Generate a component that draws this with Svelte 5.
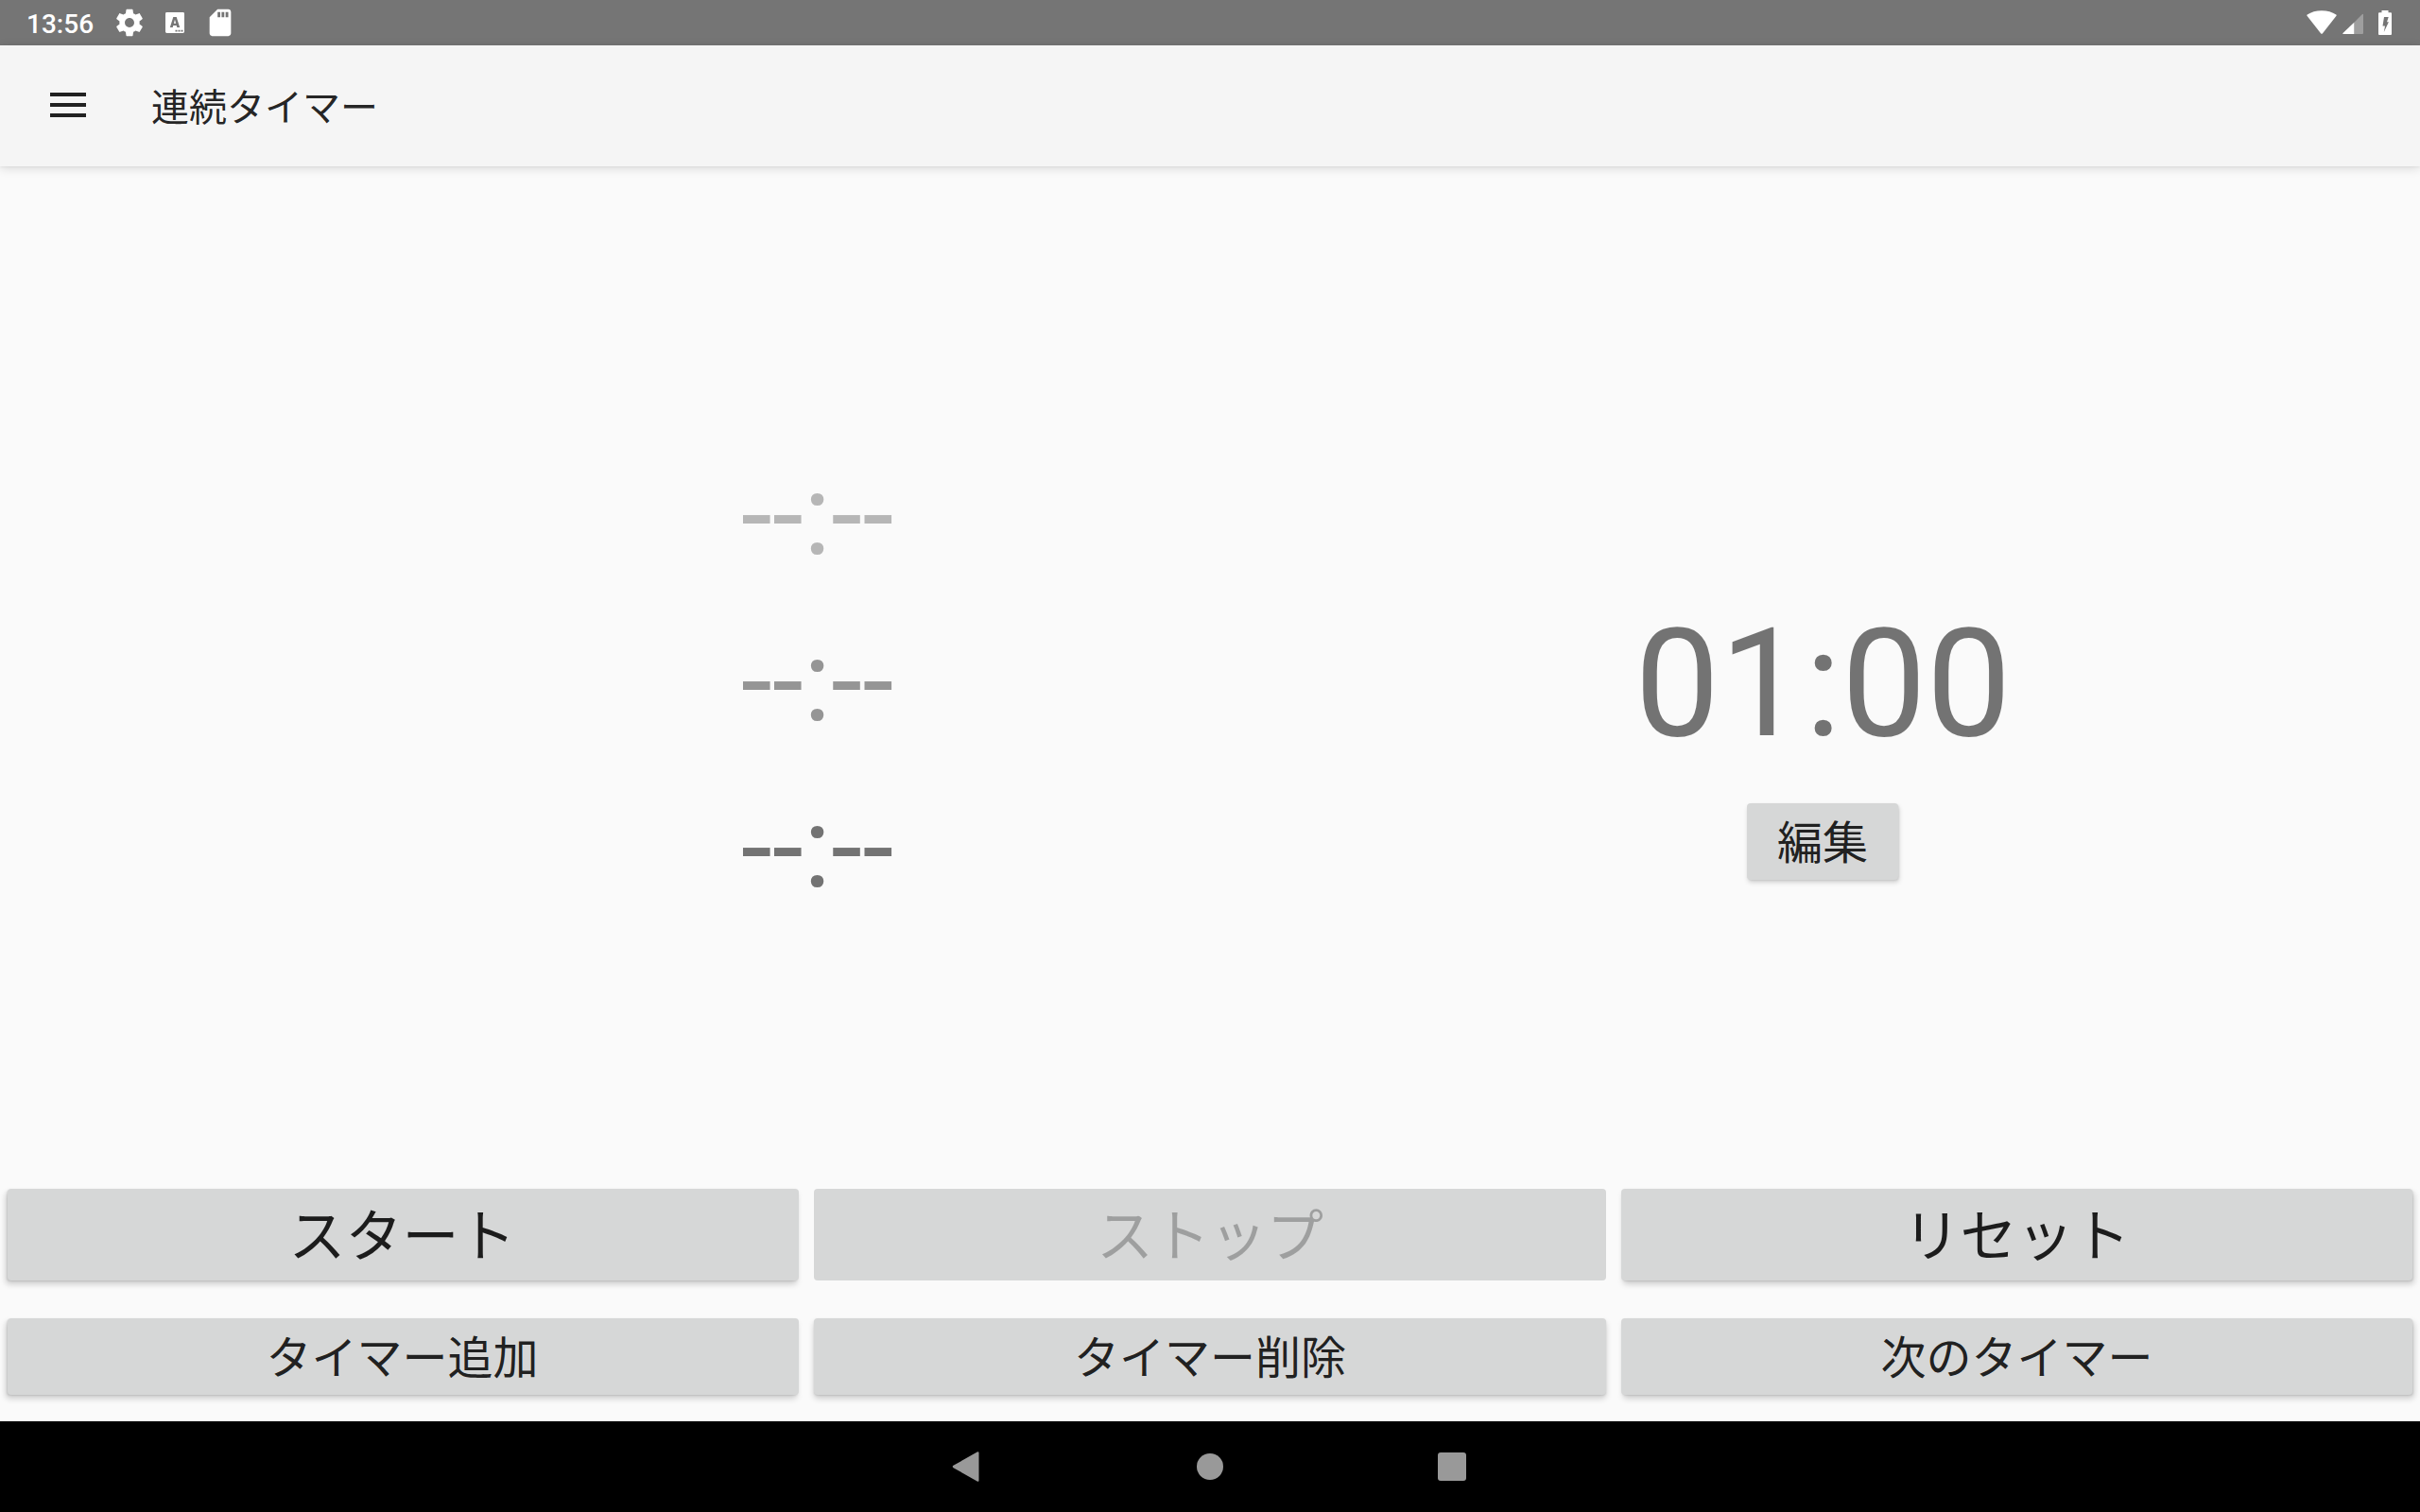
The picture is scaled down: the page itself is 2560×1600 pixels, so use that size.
<script>
  const queue = ['light', 'mid', 'full'];
  const controls = [
    { label: 'スタート' },
    { label: 'ストップ', disabled: true },
    { label: 'リセット' },
  ];
  const actions = ['タイマー追加', 'タイマー削除', '次のタイマー'];
</script>

<div class="screen">
  <header class="status">
    <span class="clock">13:56</span>
    <svg class="gear" viewBox="0 0 24 24"><path d="M19.43 12.98c.04-.32.07-.64.07-.98s-.03-.66-.07-.98l2.11-1.65c.19-.15.24-.42.12-.64l-2-3.46c-.12-.22-.39-.3-.61-.22l-2.49 1c-.52-.4-1.08-.73-1.69-.98l-.38-2.65C14.46 2.18 14.25 2 14 2h-4c-.25 0-.46.18-.49.42l-.38 2.65c-.61.25-1.17.59-1.69.98l-2.49-1c-.23-.09-.49 0-.61.22l-2 3.46c-.13.22-.07.49.12.64l2.11 1.65c-.04.32-.07.65-.07.98s.03.66.07.98l-2.11 1.65c-.19.15-.24.42-.12.64l2 3.46c.12.22.39.3.61.22l2.49-1c.52.4 1.08.73 1.69.98l.38 2.65c.03.24.24.42.49.42h4c.25 0 .46-.18.49-.42l.38-2.65c.61-.25 1.17-.59 1.69-.98l2.49 1c.23.09.49 0 .61-.22l2-3.46c.12-.22.07-.49-.12-.64l-2.11-1.65zM12 15.5c-1.93 0-3.5-1.57-3.5-3.5s1.57-3.5 3.5-3.5 3.5 1.57 3.5 3.5-1.57 3.5-3.5 3.5z" /></svg>
    <svg class="ime" viewBox="0 0 20 22">
      <rect width="20" height="22" rx="1.4" />
      <path class="cut" fill-rule="evenodd" d="M8.300 5h3.400l3.500 11h-2.900l-.6-2H8.300l-.6 2H4.800zM10 7.800l-1.100 4h2.200z" />
      <path class="cut" d="M10.500 18.700h2v1.800h-2zM13.500 18.700h2v1.800h-2zM16.500 18.700h2v1.800h-2z" />
    </svg>
    <svg class="sd" viewBox="0 0 24 24"><path d="M18 2h-8L4.020 8 4 20c0 1.100.9 2 2 2h12c1.100 0 2-.9 2-2V4c0-1.100-.9-2-2-2zm-6 6h-2V4h2v4zm3 0h-2V4h2v4zm3 0h-2V4h2v4z" /></svg>
    <svg class="wifi" viewBox="0 0 32 26"><path d="M17 24.300q-1 1-2 0L.500 5.800q-.5-.7.2-1.200C5 1.700 10 .200 16 .200s11 1.500 15.300 4.400q.7.500.2 1.200z" /></svg>
    <svg class="signal" viewBox="0 0 22 22">
      <path class="dim" d="M12.300 9.700 21 1q1-.8 1 .5V21q0 1-1 1h-8.700z" />
      <path d="M12.300 9.700V22H1q-1.300 0-.5-1z" />
    </svg>
    <svg class="battery" viewBox="0 0 14 26">
      <path fill-rule="evenodd" d="M3.500 0h7v2.300H13q1 0 1 1V25q0 1-1 1H1q-1 0-1-1V3.300q0-1 1-1h2.500zM6 7 4.500 16.500H7L5.800 23l5.100-10.800H9L10.700 7z" />
    </svg>
  </header>

  <div class="toolbar">
    <svg class="menu" viewBox="0 0 38 26"><path d="M0 0h38v4H0zM0 11h38v4H0zM0 22h38v4H0z" /></svg>
    <h1>連続タイマー</h1>
  </div>

  <main>
    <div class="timers">
      <div class="queue">
        {#each queue as level}
          <div class="slot {level}">--:--</div>
        {/each}
      </div>
      <div class="current">
        <div class="time">01:00</div>
        <button class="edit">編集</button>
      </div>
    </div>
    <div class="row large">
      {#each controls as c}
        <button disabled={c.disabled}>{c.label}</button>
      {/each}
    </div>
    <div class="row small">
      {#each actions as label}
        <button>{label}</button>
      {/each}
    </div>
  </main>

  <nav>
    <svg class="back" viewBox="0 0 40 40"><path d="M34.500 5.500v29q0 2-1.800 1L7.500 21.200q-1.600-1.200 0-2.400L32.700 4.500q1.800-1 1.800 1z" /></svg>
    <svg viewBox="0 0 40 40"><circle cx="20" cy="20" r="14" /></svg>
    <svg viewBox="0 0 40 40"><rect x="5" y="5" width="30" height="30" rx="3" /></svg>
  </nav>
</div>

<style>
  :global(body) {
    margin: 0;
    background: #fafafa;
  }
  .screen {
    width: 2560px;
    height: 1600px;
    display: flex;
    flex-direction: column;
    overflow: hidden;
    background: #fafafa;
    font-family: Roboto, 'Noto Sans CJK JP', sans-serif;
    color: rgba(0, 0, 0, 0.87);
  }
  svg {
    display: block;
    flex: none;
  }
  .status {
    height: 48px;
    flex: none;
    box-sizing: border-box;
    display: flex;
    align-items: center;
    padding: 0 22px 0 28px;
    background: #757575;
    color: #fff;
    fill: #fff;
  }
  .clock {
    width: 92px;
    font-size: 28px;
    font-weight: 500;
    line-height: 46px;
    padding-top: 4px;
  }
  .gear {
    width: 34px;
    height: 34px;
  }
  .ime {
    width: 20px;
    height: 22px;
    margin-left: 21px;
  }
  .cut {
    fill: #757575;
  }
  .sd {
    width: 34px;
    height: 34px;
    margin-left: 21px;
  }
  .wifi {
    width: 32px;
    height: 26px;
    margin-left: auto;
  }
  .signal {
    width: 22px;
    height: 22px;
    margin: 2px 16px 0 6px;
  }
  .dim {
    opacity: 0.3;
  }
  .battery {
    width: 14px;
    height: 26px;
    margin-right: 8px;
  }
  .toolbar {
    height: 128px;
    flex: none;
    display: flex;
    align-items: center;
    background: #f5f5f5;
    box-shadow: 0 2px 10px rgba(0, 0, 0, 0.14), 0 1px 2px rgba(0, 0, 0, 0.04);
  }
  .menu {
    width: 38px;
    height: 26px;
    margin: 0 0 2px 53px;
    fill: #212121;
  }
  h1 {
    margin: 0 0 0 69px;
    padding-top: 5px;
    font-size: 40px;
    font-weight: 400;
    line-height: 58px;
  }
  main {
    flex: 1;
    display: flex;
    flex-direction: column;
  }
  .timers {
    height: 1082px;
    display: grid;
    grid-template-columns: 866px 1263px;
    padding-left: 431px;
    box-sizing: border-box;
  }
  .queue {
    padding: 281px 0 0 1px;
    text-align: center;
    font-size: 120px;
    line-height: 176px;
  }
  .slot {
    color: rgba(0, 0, 0, 0.54);
  }
  .light {
    color: rgba(0, 0, 0, 0.27);
  }
  .mid {
    color: rgba(0, 0, 0, 0.405);
  }
  .current {
    display: flex;
    flex-direction: column;
    align-items: center;
    padding-top: 454px;
  }
  .time {
    font-size: 160px;
    line-height: 188px;
    color: rgba(0, 0, 0, 0.54);
  }
  button {
    display: flex;
    align-items: center;
    justify-content: center;
    box-sizing: border-box;
    border: 0;
    padding: 0 0 6px;
    border-radius: 4px;
    background: #d6d7d7;
    color: rgba(0, 0, 0, 0.87);
    font-family: inherit;
    font-size: 48px;
    box-shadow: 0 4px 6px rgba(0, 0, 0, 0.18), 0 1px 2px rgba(0, 0, 0, 0.1);
  }
  /* Shadows lean away from a light centred above the screen. */
  .row button:first-child {
    padding-right: 2px;
    box-shadow: -2px 4px 6px rgba(0, 0, 0, 0.18), -1px 1px 2px rgba(0, 0, 0, 0.1);
  }
  .row button:last-child {
    box-shadow: 2px 4px 6px rgba(0, 0, 0, 0.18), 1px 1px 2px rgba(0, 0, 0, 0.1);
  }
  .row button:disabled {
    color: rgba(0, 0, 0, 0.26);
    box-shadow: none;
  }
  .edit {
    width: 160px;
    height: 81px;
    margin: 32px 1px 0 0;
    box-shadow: 1px 3px 5px rgba(0, 0, 0, 0.16), 1px 1px 2px rgba(0, 0, 0, 0.08);
  }
  .row {
    display: grid;
    grid-template-columns: 837px 838px 837px;
    gap: 16px;
    padding: 0 8px;
  }
  .large {
    margin-bottom: 40px;
  }
  .large button {
    height: 97px;
    font-size: 60px;
  }
  .small button {
    height: 81px;
  }
  nav {
    height: 96px;
    flex: none;
    display: flex;
    align-items: center;
    justify-content: center;
    gap: 216px;
    background: #000;
    fill: #999;
  }
  nav svg {
    width: 40px;
    height: 40px;
  }
  nav .back {
    margin: 0 3px 0 -3px;
  }
</style>
